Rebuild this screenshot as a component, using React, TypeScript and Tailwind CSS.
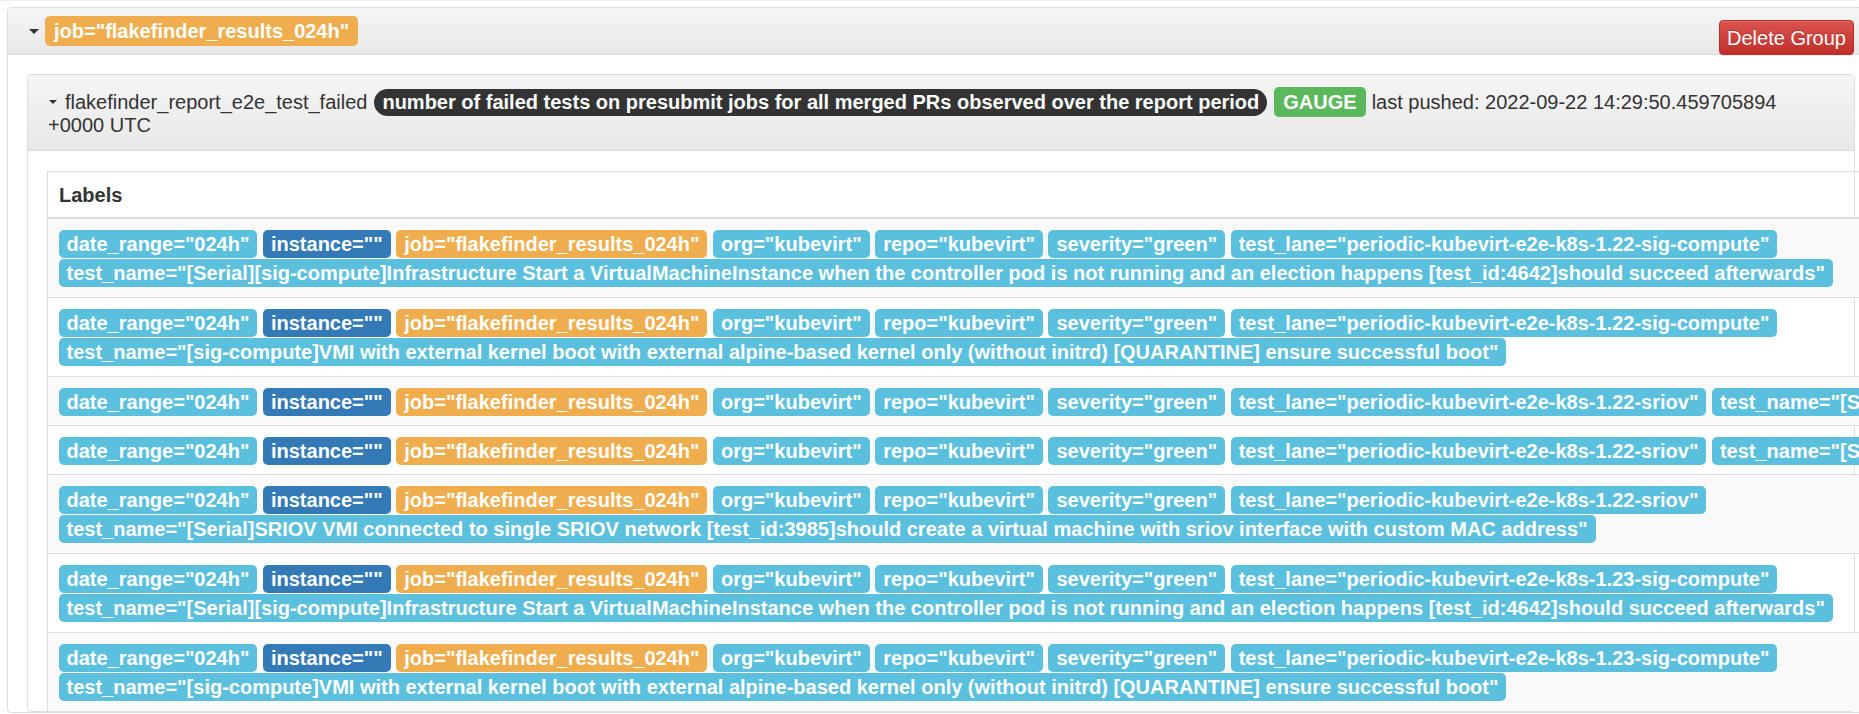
import React from "react";

type Color = "info" | "primary" | "warning";

const bg: Record<Color, string> = {
  info: "bg-[#5bc0de]",
  primary: "bg-[#337ab7]",
  warning: "bg-[#f0ad4e]",
};

function Label({ c, children }: { c: Color; children: React.ReactNode }) {
  return (
    <span
      className={`inline-block h-[28px] pt-[1px] leading-[27px] px-[8px] rounded-[5px] text-white font-bold text-[20px] whitespace-nowrap ${bg[c]}`}
    >
      {children}
    </span>
  );
}

const T1 =
  'test_name="[Serial][sig-compute]Infrastructure Start a VirtualMachineInstance when the controller pod is not running and an election happens [test_id:4642]should succeed afterwards"';
const T2 =
  'test_name="[sig-compute]VMI with external kernel boot with external alpine-based kernel only (without initrd) [QUARANTINE] ensure successful boot"';
const T3 =
  'test_name="[Serial]SRIOV VMI connected to single SRIOV network [test_id:3959]should create a virtual machine with sriov interface"';
const T4 =
  'test_name="[Serial]SRIOV VMI connected to single SRIOV network [test_id:1754]should create a virtual machine with two sriov interfaces referring the same resource"';
const T5 =
  'test_name="[Serial]SRIOV VMI connected to single SRIOV network [test_id:3985]should create a virtual machine with sriov interface with custom MAC address"';

type Row = { lane: string; test: string; wrap: boolean };

const rows: Row[] = [
  { lane: "1.22-sig-compute", test: T1, wrap: true },
  { lane: "1.22-sig-compute", test: T2, wrap: true },
  { lane: "1.22-sriov", test: T3, wrap: false },
  { lane: "1.22-sriov", test: T4, wrap: false },
  { lane: "1.22-sriov", test: T5, wrap: true },
  { lane: "1.23-sig-compute", test: T1, wrap: true },
  { lane: "1.23-sig-compute", test: T2, wrap: true },
];

function Caret({ big }: { big?: boolean }) {
  return big ? (
    <span className="inline-block w-0 h-0 border-x-[5px] border-x-transparent border-t-[5px] border-t-[#333]" />
  ) : (
    <span className="inline-block w-0 h-0 border-x-[4px] border-x-transparent border-t-[4px] border-t-[#333]" />
  );
}

function LabelRow({ row, idx }: { row: Row; idx: number }) {
  const first = [
    <Label key="a" c="info">date_range="024h"</Label>,
    <Label key="b" c="primary">instance=""</Label>,
    <Label key="c" c="warning">job="flakefinder_results_024h"</Label>,
    <Label key="d" c="info">org="kubevirt"</Label>,
    <Label key="e" c="info">repo="kubevirt"</Label>,
    <Label key="f" c="info">severity="green"</Label>,
    <Label key="g" c="info">{`test_lane="periodic-kubevirt-e2e-k8s-${row.lane}"`}</Label>,
  ];
  const striped = idx % 2 === 0;
  return (
    <div
      className={`pl-[10.5px] pt-[11px] ${row.wrap ? "pb-[10px]" : "pb-[9px]"} ${
        idx > 0 ? "border-t border-[#ddd]" : ""
      } ${striped ? "bg-[#f9f9f9]" : ""}`}
    >
      <div className="flex flex-col gap-[1px]">
        {row.wrap ? (
          <>
            <div className="flex gap-x-[5.5px] whitespace-nowrap">{first}</div>
            <div className="flex">
              <Label c="info">{row.test}</Label>
            </div>
          </>
        ) : (
          <div className="flex gap-x-[5.5px] whitespace-nowrap">
            {first}
            <Label c="info">{row.test}</Label>
          </div>
        )}
      </div>
    </div>
  );
}

export default function App() {
  return (
    <div className="w-[1859px] h-[714px] overflow-hidden bg-white text-[#333] font-['Liberation_Sans',Arial,sans-serif] text-[20px]">
      <div className="h-[7px]">
        <div className="h-[1px] w-[1855px] bg-[#eeeeee]" />
      </div>
      <div className="ml-[7px] w-[1868px] border border-[#ddd] rounded-[4px] bg-white">
        {/* group heading */}
        <div className="h-[47px] flex justify-between pl-[20px] pr-[20px] rounded-t-[3px] border-b border-[#ddd] bg-[linear-gradient(to_bottom,#f5f5f5_0%,#e8e8e8_100%)]">
          <div className="flex items-center">
            <span className="ml-[1px] mr-[6px] flex items-center">
              <Caret big />
            </span>
            <span className="inline-block h-[30px] leading-[30px] px-[9px] rounded-[5px] bg-[#f0ad4e] text-white font-bold whitespace-nowrap">
              job="flakefinder_results_024h"
            </span>
          </div>
          <button className="mt-[12px] h-[35px] pt-[1px] leading-[31px] px-[7px] rounded-[4px] border border-[#b92c28] text-white whitespace-nowrap bg-[linear-gradient(to_bottom,#d9534f_0%,#c12e2a_100%)] shadow-[inset_0_1px_0_rgba(255,255,255,0.15),0_1px_1px_rgba(0,0,0,0.075)] [text-shadow:0_-1px_0_rgba(0,0,0,0.2)]">
            Delete Group
          </button>
        </div>
        {/* group body */}
        <div className="pt-[19px] px-[19px]">
          <div className="w-full border border-[#ddd] rounded-[4px]">
            <div className="pt-[15px] pb-[13px] pl-[20px] pr-[20px] rounded-t-[3px] border-b border-[#ddd] bg-[linear-gradient(to_bottom,#f5f5f5_0%,#e8e8e8_100%)]">
              <div className="h-[24px] flex items-center whitespace-nowrap">
                <span className="ml-[1px] mr-[8px] flex items-center">
                  <Caret />
                </span>
                <span className="leading-[23px]">flakefinder_report_e2e_test_failed</span>
                <span className="ml-[7px] inline-block h-[27px] leading-[27px] px-[8px] rounded-full bg-[#333] text-white font-bold">
                  number of failed tests on presubmit jobs for all merged PRs observed over the report period
                </span>
                <span className="ml-[7px] inline-block h-[30px] leading-[30px] px-[9px] rounded-[5px] bg-[#5cb85c] text-white font-bold">
                  GAUGE
                </span>
                <span className="ml-[6px] leading-[23px]">last pushed: 2022-09-22 14:29:50.459705894</span>
              </div>
              <div className="leading-[23px]">+0000 UTC</div>
            </div>
            <div className="pt-[20px] px-[19px]">
              <div className="w-[2600px] border-l border-t border-[#ddd]">
                <div className="h-[47px] flex items-center pl-[11px] font-bold border-b-2 border-[#ddd]">
                  Labels
                </div>
                {rows.map((r, i) => (
                  <LabelRow key={i} row={r} idx={i} />
                ))}
              </div>
            </div>
          </div>
        </div>
      </div>
    </div>
  );
}
